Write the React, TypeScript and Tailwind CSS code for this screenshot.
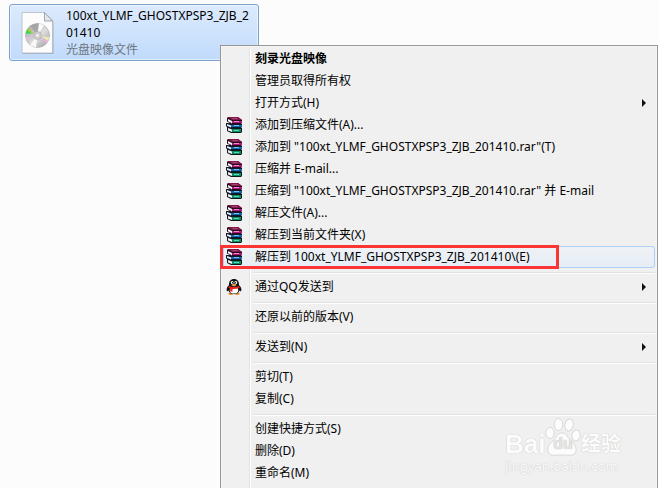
import React from "react";

type Entry =
  | { kind: "separator" }
  | {
      kind: "item";
      label: string;
      icon?: "rar" | "qq";
      bold?: boolean;
      submenu?: boolean;
      active?: boolean;
    };

const ENTRIES: Entry[] = [
  { kind: "item", label: "刻录光盘映像", bold: true },
  { kind: "item", label: "管理员取得所有权" },
  { kind: "item", label: "打开方式(H)", submenu: true },
  { kind: "item", label: "添加到压缩文件(A)...", icon: "rar" },
  { kind: "item", label: '添加到 "100xt_YLMF_GHOSTXPSP3_ZJB_201410.rar"(T)', icon: "rar" },
  { kind: "item", label: "压缩并 E-mail...", icon: "rar" },
  { kind: "item", label: '压缩到 "100xt_YLMF_GHOSTXPSP3_ZJB_201410.rar" 并 E-mail', icon: "rar" },
  { kind: "item", label: "解压文件(A)...", icon: "rar" },
  { kind: "item", label: "解压到当前文件夹(X)", icon: "rar" },
  { kind: "item", label: "解压到 100xt_YLMF_GHOSTXPSP3_ZJB_201410\\(E)", icon: "rar", active: true },
  { kind: "separator" },
  { kind: "item", label: "通过QQ发送到", icon: "qq", submenu: true },
  { kind: "separator" },
  { kind: "item", label: "还原以前的版本(V)" },
  { kind: "separator" },
  { kind: "item", label: "发送到(N)", submenu: true },
  { kind: "separator" },
  { kind: "item", label: "剪切(T)" },
  { kind: "item", label: "复制(C)" },
  { kind: "separator" },
  { kind: "item", label: "创建快捷方式(S)" },
  { kind: "item", label: "删除(D)" },
  { kind: "item", label: "重命名(M)" },
];

function RarIcon() {
  return (
    <svg width="16" height="16" viewBox="0 0 16 16" aria-hidden="true">
      {/* green book */}
      <path d="M1 10 H5 V11 H16 V15 L15 16 H5 L1 14 Z" fill="#0c1a18" />
      <path d="M2 11 L6 12.6 V15 L2 13.4 Z" fill="#f4f4f4" />
      <path d="M6 12 H15 V15 H6 Z" fill="#0c8c68" />
      <path d="M8 13 H13 V14 H8 Z" fill="#5adcb0" />
      {/* blue book */}
      <path d="M0 6 H5 V7 H16 V10 L15 11 H5 L0 9.5 Z" fill="#101a2c" />
      <path d="M1 7 L5 8.6 V10.4 L1 8.8 Z" fill="#f4f4f4" />
      <path d="M5 8 H16 V10 H5 Z" fill="#1467b0" />
      <path d="M8 8 H13 V9 H8 Z" fill="#74c2f4" />
      {/* purple book */}
      <path d="M2 0 H12 L16 3 V6 L15 7 H6 L1 4.5 V1 Z" fill="#2a0a1d" />
      <path d="M2 0 H12 L16 3 H6 Z" fill="#84184c" />
      <path d="M5 1 H11 L12 2 H7 Z" fill="#a2486f" />
      <path d="M2 2 L6 4 V6.2 L2 4.2 Z" fill="#f4f4f4" />
      <path d="M6 4 H16 V6 H6 Z" fill="#b01a80" />
      <path d="M8 4 H13 V5 H8 Z" fill="#f08acb" />
    </svg>
  );
}

function QqIcon() {
  return (
    <svg width="16" height="16" viewBox="0 0 16 16" aria-hidden="true">
      <ellipse cx="5" cy="14.8" rx="3" ry="1.1" fill="#e09030" />
      <ellipse cx="11" cy="14.8" rx="3" ry="1.1" fill="#e09030" />
      <path d="M8 0 C4.6 0 2.8 2.5 3 6 C1 8 0 10 1 12.5 L2.5 11.5 C3.5 14.5 6 15 8 15 C10 15 12.5 14.5 13.5 11.5 L15 12.5 C16 10 15 8 13 6 C13.2 2.5 11.4 0 8 0 Z" fill="#111" />
      <ellipse cx="8" cy="11.2" rx="4.2" ry="3.4" fill="#fff" />
      <ellipse cx="6.2" cy="3.5" rx="1.4" ry="1.5" fill="#fff" />
      <ellipse cx="9.8" cy="3.5" rx="1.4" ry="1.5" fill="#fff" />
      <circle cx="6.6" cy="3.7" r=".7" fill="#111" />
      <circle cx="9.4" cy="3.7" r=".7" fill="#111" />
      <ellipse cx="8" cy="6" rx="2.6" ry=".9" fill="#e8a848" />
      <path d="M2.7 7 Q8 9 13.3 7 L13.5 9 Q10 10.2 6.5 10 V12.5 H4.2 V9.5 L2.5 8.8 Z" fill="#ec2020" />
    </svg>
  );
}

function DiscImageIcon() {
  return (
    <svg width="34" height="44" viewBox="0 0 34 44" className="shrink-0" aria-hidden="true">
      <defs>
        <linearGradient id="disc" x1="0" y1="0" x2="1" y2="1">
          <stop offset="0" stopColor="#aaa" />
          <stop offset=".35" stopColor="#c6c6c6" />
          <stop offset=".55" stopColor="#dedede" />
          <stop offset="1" stopColor="#999" />
        </linearGradient>
      </defs>
      <path d="M1.5 2.5 H24 L32.5 11 V43 H1.5 Z" fill="#7e8790" opacity=".55" />
      <path d="M1 1.5 H23.5 L31.5 10 V42 H1 Z" fill="#fcfcfc" stroke="#b3b9c0" strokeWidth=".8" />
      <path d="M23.5 1.5 V10 H31.5 Z" fill="#e4e8ec" stroke="#8b939b" strokeWidth=".8" />
      <circle cx="16.5" cy="24.5" r="12" fill="url(#disc)" stroke="#a6a6a6" strokeWidth=".6" />
      <path d="M16.5 24.5 L9 15 A12 12 0 0 1 18 12.5 Z" fill="#9b9b9b" opacity=".7" />
      <path d="M16.5 24.5 L18 12.5 A12 12 0 0 1 23 14.4 Z" fill="#fff" opacity=".9" />
      <path d="M16.5 24.5 L15 36.4 A12 12 0 0 1 9 34 Z" fill="#fff" opacity=".85" />
      <path d="M13 23 L5.6 19.5 A12 12 0 0 1 7.5 16.8 Z" fill="#a8c83c" />
      <path d="M11 22.8 L4.7 22.5 A12 12 0 0 1 5.8 19 Z" fill="#32dc48" />
      <path d="M16.5 24.5 L4.6 26 A12 12 0 0 0 5.5 29.3 Z" fill="#d9c3d8" />
      <path d="M20 25.5 L28.4 26 A12 12 0 0 1 27 30 Z" fill="#efe6b4" />
      <path d="M20 27 L27 30 A12 12 0 0 1 25.2 32.8 Z" fill="#e8b3dc" />
      <circle cx="16.5" cy="24.5" r="4" fill="#d2d2d2" stroke="#aaa" strokeWidth=".7" />
      <circle cx="16.5" cy="24.5" r="1.7" fill="#fff" stroke="#aaa" strokeWidth=".5" />
    </svg>
  );
}

function MenuItem({ item }: { item: Extract<Entry, { kind: "item" }> }) {
  return (
    <button
      type="button"
      role="menuitem"
      aria-haspopup={item.submenu ? "menu" : undefined}
      className={
        "relative flex h-[22px] w-full items-center rounded-[3px] border pr-2 text-left " +
        (item.active
          ? "border-[#aecff7] bg-linear-to-b from-[#eff2f5] to-[#e5edf6]"
          : "border-transparent")
      }
    >
      <span className="flex w-[31px] shrink-0 pl-[2px]">
        {item.icon === "rar" && <RarIcon />}
        {item.icon === "qq" && <QqIcon />}
      </span>
      <span className={"flex-1 whitespace-nowrap " + (item.bold ? "font-bold" : "")}>{item.label}</span>
      {item.submenu && (
        <svg width="4" height="8" viewBox="0 0 4 8" aria-hidden="true">
          <path d="M0 0 L4 4 L0 8 Z" fill="#111" />
        </svg>
      )}
      {item.active && (
        <span className="pointer-events-none absolute -top-[2px] -left-1 h-6 w-[339px] border-3 border-[#fb3434]" />
      )}
    </button>
  );
}

function Watermark() {
  return (
    <div className="pointer-events-none absolute right-[33px] bottom-[13px] w-[120px] text-[#fcfcfc] [text-shadow:0_0_1px_#cccccc,0_0_1px_#cccccc]">
      <div className="flex h-10 items-end">
        <span className="w-10 font-['Liberation_Sans'] text-[26px] leading-[26px] font-bold">Bai</span>
        <span className="relative h-10 w-9 shrink-0">
          <svg width="36" height="40" viewBox="0 0 36 40" fill="#fcfcfc" stroke="#d8d8d8" strokeWidth="1" aria-hidden="true">
            <ellipse cx="5" cy="16" rx="4.2" ry="5.5" />
            <ellipse cx="13.5" cy="7.5" rx="4.2" ry="6" />
            <ellipse cx="24" cy="8" rx="4.2" ry="6" transform="rotate(12 24 8)" />
            <ellipse cx="31" cy="18.5" rx="4.2" ry="5.5" transform="rotate(10 31 18.5)" />
            <path d="M17 16 C12 16 11 21 8 24 C4 27 2 30 3 34 C4 40 11 38 17 38 C23 38 30 40 31 34 C32 29 28 26 25 23 C22 19 21 16 17 16 Z" />
          </svg>
          <span className="absolute inset-x-0 bottom-1 text-center font-['Liberation_Sans'] text-[16px] leading-[18px] font-bold text-[#e4e4e4]">
            du
          </span>
        </span>
        <span className="text-[20px] leading-[26px] font-bold whitespace-nowrap">经验</span>
      </div>
      <div className="text-[13px] leading-[18px]">jingyan.baidu.com</div>
    </div>
  );
}

export default function App() {
  return (
    <main className="relative h-screen overflow-hidden bg-[#fcfcfc] font-['Noto_Sans','Noto_Sans_CJK_SC',sans-serif] text-[12px] leading-[18px] text-black">
      <div className="pt-1 pl-[9px]">
        <button
          type="button"
          className="flex h-[57px] w-[250px] items-center rounded-[3px] border border-[#7da2ce] bg-linear-to-b from-[#dceafc] to-[#c1dbfc] pl-[11px] text-left shadow-[inset_0_0_0_1px_#ffffff80]"
        >
          <DiscImageIcon />
          <span className="ml-[11px] block w-[186px] leading-[17px]">
            <span className="block break-all">100xt_YLMF_GHOSTXPSP3_ZJB_201410</span>
            <span className="block text-[#6d7680]">光盘映像文件</span>
          </span>
        </button>
      </div>

      <div
        role="menu"
        aria-label="光盘映像文件"
        className="absolute top-[45px] right-0 left-[220px] border border-[#979797] bg-[#f0f0f0] p-[2px] shadow-[inset_0_0_0_1px_#f5f5f5]"
      >
        <div className="absolute inset-y-[2px] left-[28px] w-[2px] border-r border-l border-r-white border-l-[#e2e3e3]" />
        {ENTRIES.map((entry, i) =>
          entry.kind === "separator" ? (
            <div key={i} role="separator" className="flex h-2 items-end pb-[2px] pl-[30px]">
              <div className="h-[2px] w-full border-t border-b border-t-[#e0e0e0] border-b-white" />
            </div>
          ) : (
            <MenuItem key={i} item={entry} />
          ),
        )}
        <div role="separator" className="h-2" />
      </div>

      <Watermark />
    </main>
  );
}
